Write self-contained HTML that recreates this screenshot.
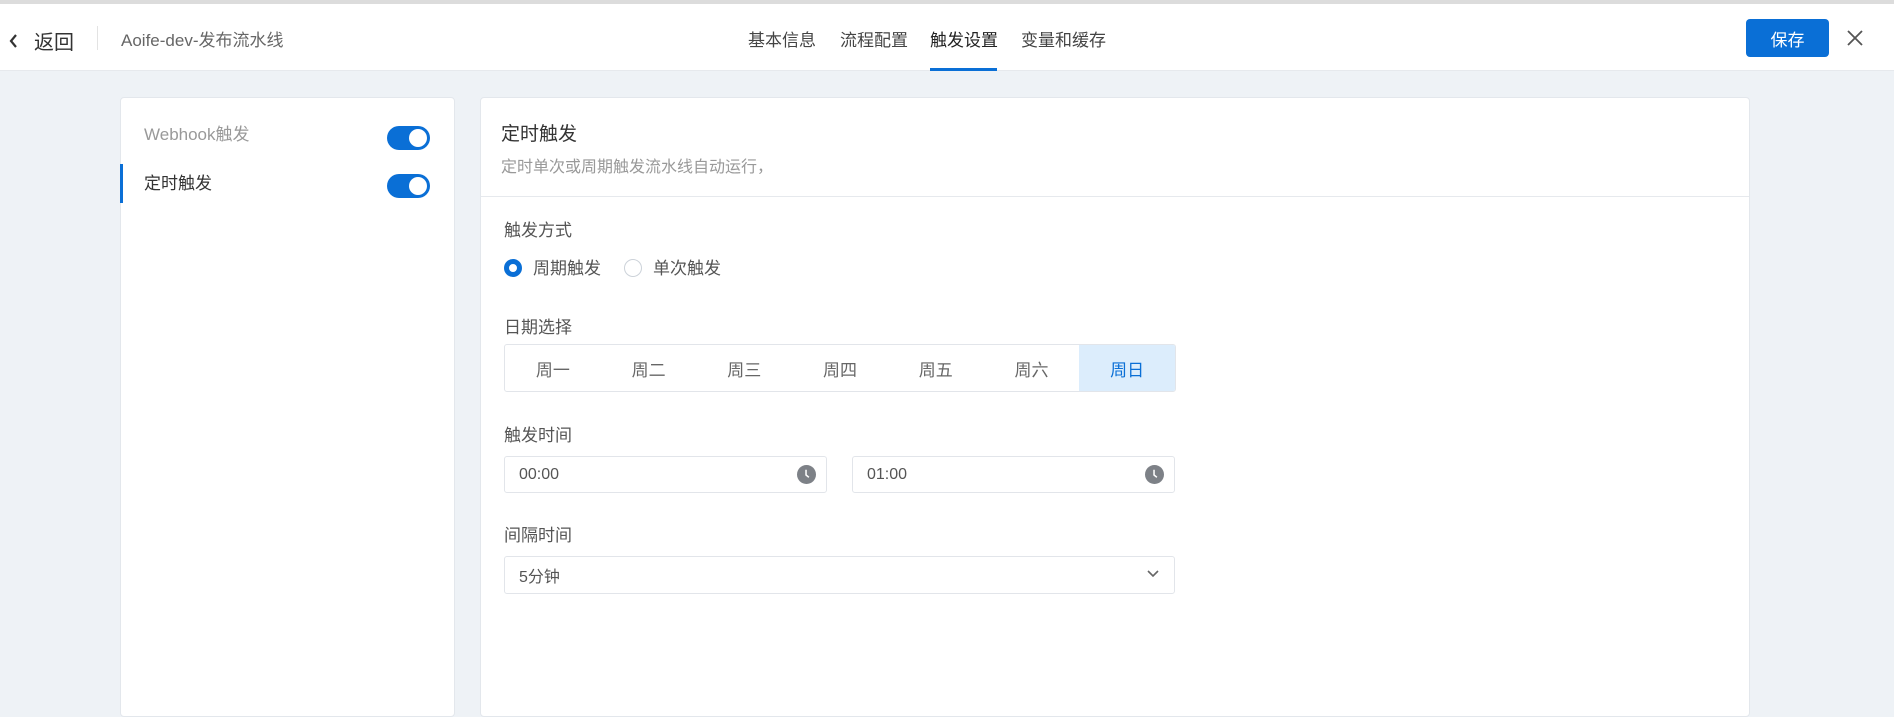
<!DOCTYPE html>
<html><head><meta charset="utf-8"><style>
*{margin:0;padding:0;box-sizing:border-box}
body{width:1894px;height:692px;overflow:hidden;background:#eef2f6;font-family:"Liberation Sans","Noto Sans CJK SC",sans-serif;position:relative;color:#333}
.a{position:absolute;white-space:nowrap}
.hdr{position:absolute;left:0;top:0;width:1894px;height:71px;background:#fff;border-top:4px solid #dcdcdc;border-bottom:1px solid #e6e9ed}
.card{position:absolute;background:#fff;border:1px solid #e3e7ec;border-radius:4px}
.tg{position:absolute;width:43px;height:24px;border-radius:12px;background:#0a6fd6}
.tg::after{content:"";position:absolute;right:3px;top:3px;width:18px;height:18px;border-radius:50%;background:#fff}
.lbl{font-size:17px;color:#555}
.inp{position:absolute;border:1px solid #e2e5ea;border-radius:3px;background:#fff;font-size:16px;color:#555;padding-left:14px;display:flex;align-items:center}
.seg{position:absolute;left:504px;top:344px;width:672px;height:48px;border:1px solid #e2e5ea;border-radius:3px;display:flex;overflow:hidden}
.seg div{flex:1;display:flex;align-items:center;justify-content:center;font-size:17px;color:#666}
.seg .on{background:#dcedfc;color:#0a6fd6}
</style></head><body>
<div class="hdr"></div>
<svg class="a" style="left:8px;top:33px" width="12" height="16" viewBox="0 0 12 16"><path d="M8 2 L3 8 L8 14" fill="none" stroke="#333" stroke-width="2.2"/></svg>
<div class="a" style="left:34px;top:26px;font-size:20px;color:#333">返回</div>
<div class="a" style="left:97px;top:26px;width:1px;height:24px;background:#e3e3e3"></div>
<div class="a" style="left:121px;top:26px;font-size:17px;color:#666">Aoife-dev-发布流水线</div>
<div class="a" style="left:748px;top:26px;font-size:17px;color:#444">基本信息</div>
<div class="a" style="left:840px;top:26px;font-size:17px;color:#444">流程配置</div>
<div class="a" style="left:930px;top:26px;font-size:17px;color:#222">触发设置</div>
<div class="a" style="left:1021px;top:26px;font-size:17px;color:#444">变量和缓存</div>
<div class="a" style="left:930px;top:68px;width:67px;height:3px;background:#0a6fd6"></div>
<div class="a" style="left:1746px;top:19px;width:83px;height:38px;background:#0a6fd6;border-radius:4px;color:#fff;font-size:17px;display:flex;align-items:center;justify-content:center">保存</div>
<svg class="a" style="left:1846px;top:29px" width="18" height="18" viewBox="0 0 18 18"><path d="M2 2L16 16M16 2L2 16" stroke="#555" stroke-width="1.8"/></svg>

<div class="card" style="left:120px;top:97px;width:335px;height:620px"></div>
<div class="a" style="left:144px;top:120px;font-size:17px;color:#999">Webhook触发</div>
<div class="tg" style="left:387px;top:126px"></div>
<div class="a" style="left:120px;top:164px;width:3px;height:39px;background:#0a6fd6"></div>
<div class="a" style="left:144px;top:169px;font-size:17px;color:#333">定时触发</div>
<div class="tg" style="left:387px;top:174px"></div>

<div class="card" style="left:480px;top:97px;width:1270px;height:620px"></div>
<div class="a" style="left:481px;top:196px;width:1268px;height:1px;background:#e6e9ed"></div>
<div class="a" style="left:501px;top:119px;font-size:19px;color:#333">定时触发</div>
<div class="a" style="left:501px;top:153px;font-size:16px;color:#999">定时单次或周期触发流水线自动运行，</div>
<div class="a lbl" style="left:504px;top:216px">触发方式</div>
<div class="a" style="left:504px;top:259px;width:18px;height:18px;border-radius:50%;border:5px solid #0a6fd6"></div>
<div class="a" style="left:533px;top:254px;font-size:17px;color:#555">周期触发</div>
<div class="a" style="left:624px;top:259px;width:18px;height:18px;border-radius:50%;border:1px solid #ccd2d9"></div>
<div class="a" style="left:653px;top:254px;font-size:17px;color:#555">单次触发</div>
<div class="a lbl" style="left:504px;top:313px">日期选择</div>
<div class="seg"><div>周一</div><div>周二</div><div>周三</div><div>周四</div><div>周五</div><div>周六</div><div class="on">周日</div></div>
<div class="a lbl" style="left:504px;top:421px">触发时间</div>
<div class="inp" style="left:504px;top:456px;width:323px;height:37px">00:00</div>
<div class="inp" style="left:852px;top:456px;width:323px;height:37px">01:00</div>
<svg class="a" style="left:797px;top:465px" width="19" height="19" viewBox="0 0 20 20"><circle cx="10" cy="10" r="10" fill="#7d8187"/><path d="M9.5 5V10.5L12.5 13" fill="none" stroke="#fff" stroke-width="1.6"/></svg>
<svg class="a" style="left:1145px;top:465px" width="19" height="19" viewBox="0 0 20 20"><circle cx="10" cy="10" r="10" fill="#7d8187"/><path d="M9.5 5V10.5L12.5 13" fill="none" stroke="#fff" stroke-width="1.6"/></svg>
<div class="a lbl" style="left:504px;top:521px">间隔时间</div>
<div class="inp" style="left:504px;top:556px;width:671px;height:38px">5分钟</div>
<svg class="a" style="left:1146px;top:569px" width="14" height="10" viewBox="0 0 14 10"><path d="M2 2L7 7L12 2" fill="none" stroke="#666" stroke-width="1.6"/></svg>
</body></html>
